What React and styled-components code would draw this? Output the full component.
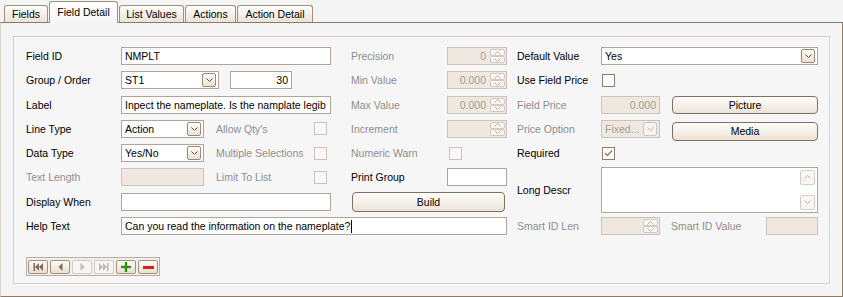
import React from 'react';
import styled, { createGlobalStyle, css } from 'styled-components';

const GlobalStyle = createGlobalStyle`
  html, body { margin: 0; padding: 0; background: #f4f4f4; }
  body {
    font-family: "Liberation Sans", Arial, sans-serif;
    font-size: 10.5px;
    color: #000;
  }
  * { box-sizing: border-box; }
`;

const Window = styled.div`
  width: 843px;
  height: 297px;
  display: flex;
  flex-direction: column;
  background: #f4f4f4;
`;

const TabStrip = styled.div`
  height: 22px;
  display: flex;
  align-items: flex-end;
  gap: 1px;
  padding-left: 4px;
`;

const Tab = styled.div`
  width: ${p => p.$w}px;
  height: 17px;
  display: flex;
  align-items: center;
  justify-content: center;
  border: 1px solid #a08f7d;
  border-bottom: none;
  border-radius: 3px 3px 0 0;
  background: linear-gradient(#fefdfb, #ebe3d7);
  white-space: nowrap;
  ${p => p.$active && css`
    height: 22px;
    margin-bottom: -1px;
    padding-bottom: 1px;
    background: linear-gradient(#ffffff, #f6f6f6);
    position: relative;
    z-index: 1;
  `}
`;

const TabPage = styled.div`
  flex: 1;
  display: flex;
  flex-direction: column;
  border: 1px solid #8c7b68;
  border-left-color: #ddd5cc;
  padding: 13px 12px 12px 12px;
`;

const GroupBox = styled.div`
  flex: 1;
  border: 1px solid #dacdbf;
  box-shadow: 1px 1px 0 #ffffff;
  background: #f6f6f6;
  padding: 10px 11px 0 12px;
`;

const FormGrid = styled.div`
  display: grid;
  grid-template-columns: 95px 210px 20px 96px 60px 10px 84px 217px;
  grid-template-rows: repeat(8, 18px);
  row-gap: 6.3px;
  align-items: center;
`;

const placed = css`
  grid-column: ${p => p.$col} / span ${p => p.$span || 1};
  grid-row: ${p => p.$row} / span ${p => p.$rows || 1};
`;

const Label = styled.span`
  ${placed}
  white-space: nowrap;
  color: ${p => (p.$disabled ? '#8e8e8e' : '#000')};
`;

const InlineLabel = styled.span`
  white-space: nowrap;
  color: ${p => (p.$disabled ? '#8e8e8e' : '#000')};
  margin-left: ${p => p.$gap || 0}px;
`;

const FieldGroup = styled.div`
  ${placed}
  display: flex;
  align-items: center;
  height: 100%;
`;

const TextBox = styled.div`
  ${placed}
  width: ${p => (p.$width ? `${p.$width}px` : 'auto')};
  height: 18px;
  display: flex;
  align-items: center;
  justify-content: ${p => (p.$right ? 'flex-end' : 'flex-start')};
  padding: 0 3px;
  border: 1px solid ${p => (p.$disabled ? '#cbc2b9' : '#aea59c')};
  background: ${p => (p.$disabled ? '#efe8e1' : '#ffffff')};
  color: ${p => (p.$disabled ? '#a59d97' : '#000')};
  white-space: nowrap;
  overflow: hidden;
  margin-left: ${p => p.$gap || 0}px;
`;

const Caret = styled.span`
  display: inline-block;
  width: 1px;
  height: 13px;
  background: #000;
  margin-left: 1px;
`;

const SelectBox = styled.div`
  ${placed}
  width: ${p => (p.$width ? `${p.$width}px` : 'auto')};
  height: 18px;
  display: flex;
  align-items: center;
  padding: 0 2px 0 3px;
  border: 1px solid ${p => (p.$disabled ? '#cbc2b9' : '#aea59c')};
  background: ${p => (p.$disabled ? '#efe8e1' : '#ffffff')};
  color: ${p => (p.$disabled ? '#a59d97' : '#000')};
  white-space: nowrap;
`;

const SelectText = styled.span`
  flex: 1;
  overflow: hidden;
`;

const DropButton = styled.span`
  width: 14px;
  height: 14px;
  display: flex;
  align-items: center;
  justify-content: center;
  border: 1px solid ${p => (p.$disabled ? '#cfc5bb' : '#9c8874')};
  border-radius: 2px;
  background: ${p => (p.$disabled ? '#f7f3ef' : 'linear-gradient(#fdfbf8, #ebe2d6)')};
  color: ${p => (p.$disabled ? '#bdb3aa' : '#5e4c3c')};
`;

const SpinBox = styled.div`
  ${placed}
  width: ${p => (p.$width ? `${p.$width}px` : 'auto')};
  height: 18px;
  display: flex;
  align-items: center;
  padding: 1px 1px 1px 3px;
  border: 1px solid #cbc2b9;
  background: #efe8e1;
  color: #a59d97;
`;

const SpinValue = styled.span`
  flex: 1;
  text-align: right;
  padding-right: 4px;
`;

const SpinButtons = styled.span`
  width: 15px;
  height: 100%;
  display: flex;
  flex-direction: column;
`;

const SpinArrow = styled.span`
  flex: 1;
  display: flex;
  align-items: center;
  justify-content: center;
  border: 1px solid #d2c9c0;
  border-radius: 2px;
  background: #f8f5f2;
  color: #b9b0a8;
`;

const CheckBox = styled.span`
  ${placed}
  width: 13px;
  height: 13px;
  display: flex;
  align-items: center;
  justify-content: center;
  border: 1px solid ${p => (p.$disabled ? '#cdc1b7' : '#8f7c69')};
  background: ${p => (p.$disabled ? '#fbf8fa' : '#ffffff')};
  color: #8a7a6c;
  margin-left: ${p => p.$gap || 0}px;
  ${p => p.$push && css`margin-left: auto; margin-right: 4px;`}
`;

const PushButton = styled.div`
  ${placed}
  height: ${p => p.$h || 19}px;
  width: ${p => (p.$width ? `${p.$width}px` : 'auto')};
  display: flex;
  align-items: center;
  justify-content: center;
  border: 1px solid #80705f;
  border-radius: 4px;
  background: linear-gradient(#fffefc, #ebe2d6);
  margin-left: ${p => p.$gap || 0}px;
  margin-top: ${p => p.$shift || 0}px;
`;

const BuildButton = styled(PushButton)`
  margin: 0 2px 0 1px;
`;

const TextArea = styled.div`
  ${placed}
  height: 46px;
  display: flex;
  justify-content: flex-end;
  border: 1px solid #aea59c;
  background: #ffffff;
  padding: 2px 2px 2px 0;
`;

const ScrollBar = styled.div`
  width: 15px;
  display: flex;
  flex-direction: column;
  justify-content: space-between;
`;

const ScrollArrow = styled.span`
  height: 15px;
  display: flex;
  align-items: center;
  justify-content: center;
  border: 1px solid #d6cdc5;
  border-radius: 2px;
  background: #f9f7f5;
  color: #bab1a9;
`;

const Navigator = styled.div`
  margin-top: 22px;
  display: inline-flex;
  gap: 2px;
  padding: 2px 1px 1px 1px;
  border: 1px solid #b9b1a9;
  background: #f1eeeb;
`;

const NavButton = styled.span`
  width: 20px;
  height: 14px;
  display: flex;
  align-items: center;
  justify-content: center;
  border: 1px solid ${p => (p.$disabled ? '#d3cac1' : '#a3917e')};
  border-radius: 2px;
  background: ${p => (p.$disabled ? '#f8f6f3' : 'linear-gradient(#fdfaf6, #e9dfd2)')};
`;

const Chevron = ({ up }) => (
  <svg width="7" height="4" viewBox="0 0 7 4">
    <path d={up ? 'M0.5 3.5 L3.5 0.5 L6.5 3.5' : 'M0.5 0.5 L3.5 3.5 L6.5 0.5'} fill="none" stroke="currentColor" strokeWidth="1" />
  </svg>
);

const Select = ({ value, disabled, ...rest }) => (
  <SelectBox $disabled={disabled} {...rest}>
    <SelectText>{value}</SelectText>
    <DropButton $disabled={disabled}><Chevron /></DropButton>
  </SelectBox>
);

const Spin = ({ value, ...rest }) => (
  <SpinBox {...rest}>
    <SpinValue>{value}</SpinValue>
    <SpinButtons>
      <SpinArrow><Chevron up /></SpinArrow>
      <SpinArrow><Chevron /></SpinArrow>
    </SpinButtons>
  </SpinBox>
);

const Check = ({ checked, ...rest }) => (
  <CheckBox {...rest}>
    {checked && (
      <svg width="9" height="8" viewBox="0 0 9 8">
        <path d="M1 4 L3.5 6.5 L8 1.5" fill="none" stroke="currentColor" strokeWidth="1.3" />
      </svg>
    )}
  </CheckBox>
);

const NavIcon = ({ kind, color }) => {
  if (kind === 'first') return (
    <svg width="10" height="8" viewBox="0 0 10 8" fill={color}>
      <rect x="0.5" y="0" width="1.5" height="8" />
      <polygon points="6,0 2,4 6,8" />
      <polygon points="10,0 6,4 10,8" />
    </svg>
  );
  if (kind === 'last') return (
    <svg width="10" height="8" viewBox="0 0 10 8" fill={color}>
      <polygon points="0,0 4,4 0,8" />
      <polygon points="4,0 8,4 4,8" />
      <rect x="8" y="0" width="1.5" height="8" />
    </svg>
  );
  if (kind === 'prev') return (
    <svg width="5" height="8" viewBox="0 0 5 8" fill={color}><polygon points="4.5,0 0.5,4 4.5,8" /></svg>
  );
  if (kind === 'next') return (
    <svg width="5" height="8" viewBox="0 0 5 8" fill={color}><polygon points="0.5,0 4.5,4 0.5,8" /></svg>
  );
  if (kind === 'add') return (
    <svg width="10" height="10" viewBox="0 0 10 10" fill={color}>
      <rect x="3.8" y="0" width="2.4" height="10" />
      <rect x="0" y="3.8" width="10" height="2.4" />
    </svg>
  );
  return (
    <svg width="11" height="3" viewBox="0 0 11 3" fill={color}><rect x="0" y="0" width="11" height="3" /></svg>
  );
};

const tabs = [
  { name: 'Fields', w: 44 },
  { name: 'Field Detail', w: 69, active: true },
  { name: 'List Values', w: 65 },
  { name: 'Actions', w: 51 },
  { name: 'Action Detail', w: 76 },
];

export default function App() {
  return (
    <Window>
      <GlobalStyle />
      <TabStrip>
        {tabs.map(t => (
          <Tab key={t.name} $w={t.w} $active={t.active}>{t.name}</Tab>
        ))}
      </TabStrip>
      <TabPage>
        <GroupBox>
          <FormGrid>
            {/* left column */}
            <Label $col={1} $row={1}>Field ID</Label>
            <TextBox $col={2} $row={1}>NMPLT</TextBox>

            <Label $col={1} $row={2}>Group / Order</Label>
            <FieldGroup $col={2} $row={2}>
              <Select value="ST1" $width={98} />
              <TextBox $width={62} $gap={11} $right>30</TextBox>
            </FieldGroup>

            <Label $col={1} $row={3}>Label</Label>
            <TextBox $col={2} $row={3}>Inpect the nameplate. Is the namplate legib</TextBox>

            <Label $col={1} $row={4}>Line Type</Label>
            <FieldGroup $col={2} $row={4}>
              <Select value="Action" $width={83} />
              <InlineLabel $disabled $gap={12}>Allow Qty's</InlineLabel>
              <Check $disabled $push />
            </FieldGroup>

            <Label $col={1} $row={5}>Data Type</Label>
            <FieldGroup $col={2} $row={5}>
              <Select value="Yes/No" $width={83} />
              <InlineLabel $disabled $gap={12}>Multiple Selections</InlineLabel>
              <Check $disabled $push />
            </FieldGroup>

            <Label $col={1} $row={6} $disabled>Text Length</Label>
            <FieldGroup $col={2} $row={6}>
              <TextBox $width={83} $disabled />
              <InlineLabel $disabled $gap={12}>Limit To List</InlineLabel>
              <Check $disabled $push />
            </FieldGroup>

            <Label $col={1} $row={7}>Display When</Label>
            <TextBox $col={2} $row={7} />

            <Label $col={1} $row={8}>Help Text</Label>
            <TextBox $col={2} $span={4} $row={8}>
              Can you read the information on the nameplate?<Caret />
            </TextBox>

            {/* middle column */}
            <Label $col={4} $row={1} $disabled>Precision</Label>
            <Spin $col={5} $row={1} value="0" />
            <Label $col={4} $row={2} $disabled>Min Value</Label>
            <Spin $col={5} $row={2} value="0.000" />
            <Label $col={4} $row={3} $disabled>Max Value</Label>
            <Spin $col={5} $row={3} value="0.000" />
            <Label $col={4} $row={4} $disabled>Increment</Label>
            <Spin $col={5} $row={4} value="" />
            <Label $col={4} $row={5} $disabled>Numeric Warn</Label>
            <Check $col={5} $row={5} $disabled $gap={2} />
            <Label $col={4} $row={6}>Print Group</Label>
            <TextBox $col={5} $row={6} />
            <BuildButton $col={4} $span={2} $row={7} $h={20}>Build</BuildButton>

            {/* right column */}
            <Label $col={7} $row={1}>Default Value</Label>
            <Select $col={8} $row={1} value="Yes" />

            <Label $col={7} $row={2}>Use Field Price</Label>
            <Check $col={8} $row={2} $gap={1} />

            <Label $col={7} $row={3} $disabled>Field Price</Label>
            <FieldGroup $col={8} $row={3}>
              <TextBox $width={59} $disabled $right>0.000</TextBox>
              <PushButton $width={146} $gap={12} $h={18}>Picture</PushButton>
            </FieldGroup>

            <Label $col={7} $row={4} $disabled>Price Option</Label>
            <FieldGroup $col={8} $row={4}>
              <Select value="Fixed..." $width={59} disabled />
              <PushButton $width={146} $gap={12} $shift={5}>Media</PushButton>
            </FieldGroup>

            <Label $col={7} $row={5}>Required</Label>
            <Check $col={8} $row={5} $gap={1} checked />

            <Label $col={7} $row={6} $rows={2}>Long Descr</Label>
            <TextArea $col={8} $row={6} $rows={2}>
              <ScrollBar>
                <ScrollArrow><Chevron up /></ScrollArrow>
                <ScrollArrow><Chevron /></ScrollArrow>
              </ScrollBar>
            </TextArea>

            <Label $col={7} $row={8} $disabled>Smart ID Len</Label>
            <FieldGroup $col={8} $row={8}>
              <Spin $width={59} value="" />
              <InlineLabel $disabled $gap={11}>Smart ID Value</InlineLabel>
              <TextBox $width={52} $disabled $gap={0} style={{ marginLeft: 'auto' }} />
            </FieldGroup>
          </FormGrid>

          <Navigator>
            <NavButton><NavIcon kind="first" color="#7f6b58" /></NavButton>
            <NavButton><NavIcon kind="prev" color="#7f6b58" /></NavButton>
            <NavButton $disabled><NavIcon kind="next" color="#c3bab1" /></NavButton>
            <NavButton $disabled><NavIcon kind="last" color="#c3bab1" /></NavButton>
            <NavButton><NavIcon kind="add" color="#2b9416" /></NavButton>
            <NavButton><NavIcon kind="remove" color="#d81f1f" /></NavButton>
          </Navigator>
        </GroupBox>
      </TabPage>
    </Window>
  );
}
